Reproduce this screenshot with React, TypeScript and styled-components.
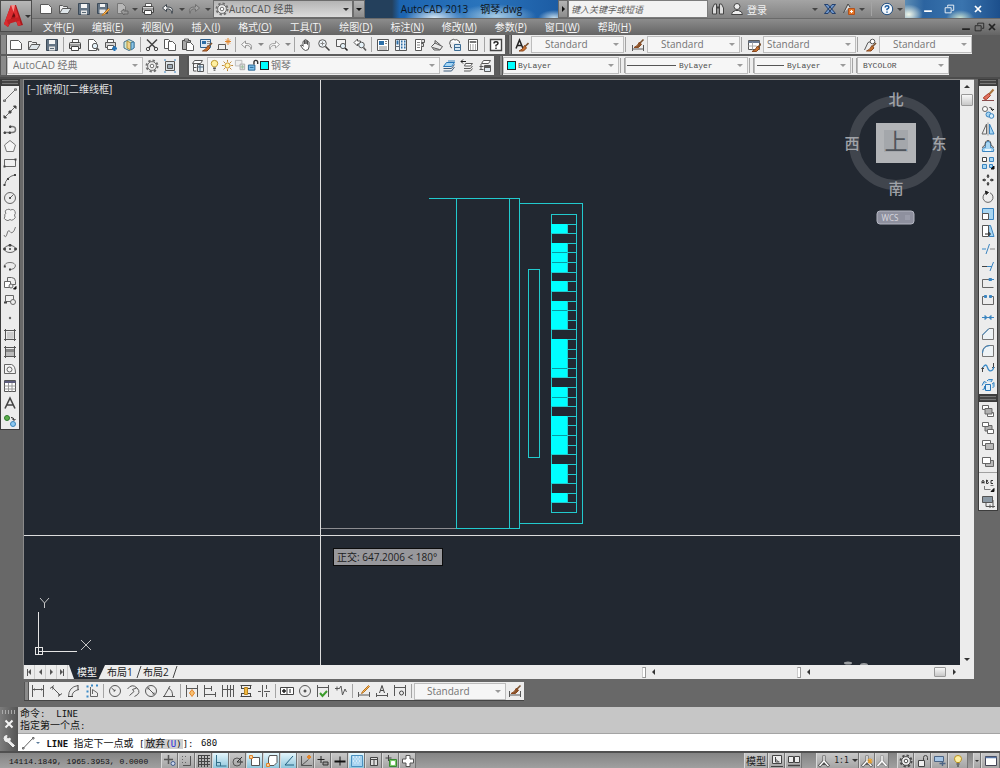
import React from 'react';
import styled, { createGlobalStyle, css } from 'styled-components';

const G = '#585858';
const B = '#3a84c0';
const LB = '#a8d6f2';
const O = '#e2852a';
const CYAN = '#00ffff';
const LINE = '#22cace';

const UI = '"Open Sans", "Noto Sans CJK SC", sans-serif';
const MONO = '"Liberation Mono", "Noto Sans CJK SC", monospace';
const CONSOLE = '"DejaVu Sans Mono", "Noto Sans CJK SC", monospace';

const GlobalStyle = createGlobalStyle`
  * { box-sizing: border-box; }
  html, body { margin: 0; padding: 0; }
  body { background: #686868; font-family: ${UI}; font-size: 10px; color: #222; overflow: hidden; }
  button, input, select { font: inherit; color: inherit; margin: 0; padding: 0; border: 0; background: none; border-radius: 0; outline: none; }
`;

/* ---------- icons, all on a 14 x 14 grid ---------- */

const p = (d: string, stroke: string = G, fill: string = 'none', w: number = 1) => (
  <path d={d} stroke={stroke} fill={fill} strokeWidth={w} />
);

const pencil = <>{p('M11.5 1.5 5.5 7.5 4.5 9.5 6.5 8.5 12.5 2.5Z', '#b87420', '#f2b45c')}</>;
const gear = (c: string) => (
  <>
    <circle cx="7" cy="7" r="5.5" stroke={c} strokeWidth="2" strokeDasharray="2.3 2" />
    <circle cx="7" cy="7" r="4.400" stroke={c} fill="#eee" />
    <circle cx="7" cy="7" r="1.800" stroke={c} fill="#fff" />
  </>
);
const page = (x: number, y: number, w: number, h: number, fill = '#fff') =>
  p(`M${x}.5 ${y}.5h${w - 3}l3 3v${h - 3}h-${w}z`, G, fill);
const compassMan = (c: string) => (
  <>
    {p('M7 1.500V7L2 12.500M7 7l5 5.500M4.500 9.500h5', c, 'none', 3)}
    {p('M7 2V7L2.500 12M7 7l4.500 5', '#fff', 'none', 1.400)}
  </>
);
const painter = (x: number, y: number, light: string) => (
  <g transform={`translate(${x} ${y})`}>
    {p('M9.500 .5 6 4', '#7a5230', 'none', 1.600)}
    {p('M5.500 3l2 2.500L4.500 8.500H0q3.500-1 5.500-5.500z', '#8a4a20', light)}
  </g>
);

const icons: Record<string, React.ReactNode> = {
  new: p('M1.500 2.500h8l3 3v6h-11z', G, '#fdfdfd'),
  open: <>{p('M1.500 11.500v-8h3l1 1h4v2', G, '#eee')}{p('M1.500 11.500l3-5h8.500l-3 5z', G, '#dfe6ea')}</>,
  save: <>{p('M1.500 1.500h11v11h-11z', '#3c4a58', '#647484')}{p('M4 2h6v4H4z', 'none', '#f4f4f4')}{p('M4 8.500h6v4H4z', 'none', '#e4e4e4')}{p('M5 10.500h4', '#5a6a78')}</>,
  saveas: <>{p('M1.500 1.500h10v10h-10z', '#3c4a58', '#647484')}{p('M4 2h5v3H4z', 'none', '#f4f4f4')}{p('M3.500 7.500h6v4h-6z', 'none', '#e4e4e4')}{p('M12.500 6.500l-5 5-1.500 2 2.500-1 5-5z', '#b87420', '#f2b45c')}</>,
  pageoff: <>{p('M2.500 1.500h5l3 3v7h-8z', '#777', '#b8b8b8')}{p('M6 9.500 9 7v2h4v3h-4v1z', '#666', '#999')}</>,
  print: <>{p('M4.500 5V1.500h6V5', G, '#fff')}{p('M1.500 5.500q0-1 1-1h9q1 0 1 1v5h-11z', '#444', '#d6d6d6')}{p('M3.500 8.500h7v4h-7z', '#444', '#fff')}{p('M2 7h10', '#666')}</>,
  preview: <>{page(2, 1, 8, 11)}<circle cx="9" cy="8" r="2.700" stroke={G} fill="#e4f1f8" />{p('M11 10l2 2.500', G, 'none', 1.500)}</>,
  publish: <>{p('M3.500 4V1.500h6V4', G, '#fff')}{p('M1.500 4.500h10v5h-10z', G, '#d6d6d6')}{p('M3.500 7.500h6v4h-6z', G, '#fff')}{p('M8 10.500h5M10.500 8v5', '#2474b8', 'none', 2)}</>,
  globe3d: <>{p('M2 4 7 1.500 12 4v6L7 12.500 2 10z', '#47708a', '#cfe8d4')}{p('M5 3l4 2v7L5 10z', '#b0943a', '#f0d08a')}{p('M9 4.500l3-.5v6l-3 2z', '#3e7ea8', '#8cc4e4')}</>,
  cut: <>{p('M2 1.500 10.500 10M12 1.500 3.500 10', '#444', 'none', 1.500)}<circle cx="3" cy="11" r="1.700" stroke="#444" /><circle cx="11" cy="11" r="1.700" stroke="#444" /></>,
  copy: <>{page(1, 1, 7, 9)}{page(5, 3, 7, 9)}</>,
  paste: <>{p('M1.500 2.500h8v9h-8z', '#4a4a4a', '#a8a8a8')}{p('M3.500 1h4v2h-4z', G, '#ddd')}{page(5, 4, 7, 8)}</>,
  match: <>{p('M1.500 1.500h10v8h-10z', '#2c5f8c', '#dbe9f4')}{p('M3 3h4v3H3z', 'none', '#2c6fa8')}{p('M8 3.500h3M8 5.500h3', '#888')}{painter(3.5, 4.5, '#c8702c')}</>,
  blockedit: <>{p('M1.500 6.500h7v5h-7zM0 11.500h11', G, '#eee')}{p('M11 0v7M8 3.500h6M9 1.500l4 4M13 1.500l-4 4', O)}</>,
  undo: p('M5.500 3 1.500 6.500 5.500 10V7.500Q10.500 6.500 11 11.500 13.500 5 5.500 5.500Z', '#959595', '#fafafa'),
  redo: p('M8.500 3l4 3.500-4 3.500V7.500Q3.500 6.500 3 11.500 .5 5 8.500 5.500Z', '#a2a2a2', '#fafafa'),
  undod: p('M5.500 2.500 1.500 6 5.500 9.500V7Q10.500 6 11 11.500 13.500 4.500 5.500 5Z', '#3c444c', '#f6f6f6'),
  redod: p('M8.500 2.500l4 3.500-4 3.500V7Q3.500 6 3 11.500 .5 4.500 8.500 5Z', '#707070', '#a4a4a4'),
  pan: p('M4 8V3.500q1-1 1.500 0V6 2q1-1 1.500 0v4-3.500q1-1 1.500 0V6.500 4q1-1 1.500 0v5q0 3.500-3.500 3.500Q4.500 12.500 1.500 7.500q1.500-1.500 3 1', '#505050', '#fff'),
  zoom: <><circle cx="5.500" cy="5.500" r="3.800" stroke={G} fill="#eef4f8" />{p('M5.500 3.500v4M3.500 5.500h4', '#888')}{p('M8.500 8.500l4 4', '#444', 'none', 1.600)}</>,
  zoomwin: <>{p('M1.500 1.500h9v7h-9z', G, '#f4f4f4')}<circle cx="8" cy="8" r="2.600" stroke={G} fill="#e4f1f8" />{p('M10 10l2.500 2.500', '#222', 'none', 1.600)}</>,
  zoomprev: <>{p('M1 4.500 4.500 1v2h3v3h-3v2z', G, '#fff')}<circle cx="8.500" cy="7" r="2.800" stroke={G} fill="#e4f1f8" />{p('M10.500 9.500l2.500 3', G, 'none', 1.600)}</>,
  props: <>{p('M1.500 1.500h11v11h-11z', G, '#fff')}{p('M3 3h5v4H3z', 'none', '#2c6fa8')}{p('M9 3.500h2M9 5.500h2M3 9h8M3 11h8', '#888')}</>,
  center: <>{p('M1.500 1.500h11v11h-11z', G, '#eef3f7')}{p('M5.500 1.500v11M1.500 8.500h4', '#5c6c7c')}{p('M7 3.500h1.500M10 3.500h1.500M7 6.500h1.500M10 6.500h1.500M7 9.500h1.500M10 9.500h1.500M2.500 3.500h2M2.500 5.500h2', '#2c6fa8', 'none', 2)}</>,
  palettes: <>{p('M3.500 1.500h6v11h-6z', G, '#fff')}{p('M9.500 1.500h3v3h-3M9.500 5.500h2v3h-2', G, '#ddd')}{p('M5 4.500h3M5 7h3M5 9.500h3', '#888')}</>,
  sheet: <>{p('M1.500 8.500 5 5l7.500 3.500-2.500 3.500H4z', G, '#e8e8e8')}{p('M2.500 9.500l7 2M5 5V2.500L10.500 7', G)}</>,
  markup: <>{p('M2 4q0-2 2-2 1-1.500 3 0 2-1 3 0.500 2 .5 1.500 2.500', G, '#fff')}{p('M2 4q-1 2 .5 3-1 2.500 1.500 3', G)}{p('M6.500 6.500h6v6h-6z', '#3c6c94', '#d6e6f2')}{p('M6.500 9.500h6', '#3c6c94')}</>,
  calc: <>{p('M2.500 1.500h9v11h-9z', G, '#fff')}{p('M4 3.500h6v1H4z', '#777', '#cfe0ec')}{p('M4 7h1M6.500 7h1M9 7h1M4 9h1M6.500 9h1M9 9h1M4 11h1M6.500 11h1M9 11h1', G)}</>,
  help: <>{p('M1.500 1.500h11v11h-11z', '#444', '#fff', 1.400)}{p('M5 5.500Q5 3.800 7 3.800T9 5.500Q9 6.500 7 7.300v1.200M7 9.500v1.500', '#222', 'none', 1.400)}</>,
  textstyle: <>{p('M1 10.500 4.500 2 8 10.500M2.500 7.500h4', '#222', 'none', 1.500)}{painter(4, 4.500, '#c8702c')}</>,
  dimstyle: <>{p('M1.500 7v6M12.500 7v6M1.500 11h11', G)}{painter(3, 1, '#8a5228')}</>,
  tablestyle: <>{p('M1.500 2.500h11v9h-11z', G, '#fff')}{p('M1.500 4h11', '#6c7c94', 'none', 2)}{p('M5.500 4.500v7M1.500 8h8', '#aaa')}{painter(5, 5, '#c8702c')}</>,
  mleader: <>{p('M1.500 12 5 4.500 8 3.500', G)}<circle cx="9.500" cy="3.500" r="2.300" stroke={G} fill="#fff" />{painter(3.500, 4.500, '#c8702c')}</>,
  gear: gear('#707070'),
  geardark: gear('#4c4c4c'),
  wsbox: <>{p('M2.500 2.500h9v9h-9z', G, '#dde4e8')}{p('M4.500 5.500h5v4h-5z', '#555', '#9aa8b4')}{p('M1 1h2M11 1h2M1 13h2M11 13h2', B)}</>,
  layers: <>{p('M3.500 1.500h8l-2 3h-8zM3.500 5h-1v7h3M2.500 8.500h3', G, '#fff')}{p('M6.500 5.500h6v7h-6z', G, '#e8f0f6')}{p('M6.500 8h6M9 5.500v7', '#46627a')}</>,
  bulb: <>{p('M7 1.500q3.500 0 3.500 3.200Q10.500 6.500 8.500 8.500h-3Q3.500 6.500 3.500 4.700 3.500 1.500 7 1.500Z', '#b89020', '#fff0a0')}{p('M5.500 10h3M6 12h2', G, 'none', 1.500)}</>,
  sun: <><circle cx="7" cy="7" r="2.800" stroke="#c88a18" fill="#fff3b0" />{p('M7 1v2M7 11v2M1 7h2M11 7h2M2.800 2.800l1.400 1.400M9.800 9.800l1.400 1.400M11.200 2.800 9.800 4.200M4.200 9.800l-1.400 1.400', '#b87a20')}</>,
  vpfreeze: <>{p('M1.500 1.500h7v6h-7z', '#bbb', '#eee')}{p('M6.500 5.500h5v6h-5z', '#aaa', '#ddd')}{p('M7 8.500h4M9 6.500v4', '#9cbc9c')}</>,
  unlock: <>{p('M1.500 6.500h7v5.500h-7z', '#1c5c8c', '#7cc0ec')}{p('M7.500 6V3.500q0-2 2-2t2 2v2', '#333', 'none', 1.500)}{p('M3 9h4', '#1c5c8c')}</>,
  laycur: <>{p('M4.500 3.500h8l-3 4h-8z', '#2474b8', LB)}{p('M1.500 9.500h8l3-4M1.500 12h8l3-4', '#3c5c7c')}{p('M6 2h7', B)}</>,
  layprev: <>{p('M1 2.500h5M3 .5l-2 2 2 2', '#222')}{p('M5.500 4.500h7l-2 2.500h-6z', G, '#fff')}{p('M4 9.500h6.500l2-2.500M4 12h6.500l2-2.500', G)}</>,
  laystate: <>{p('M5.500 1.500h7l-2 3h-7z', G, '#fff')}{p('M1.500 7.500h4M1.500 10.500h4M3 5v6', G)}{p('M6.500 6.500h6v6h-6z', G, '#dce6ee')}{p('M6.500 8h6', G, 'none', 2)}</>,
  /* draw */
  line: p('M1.500 12.500 12.500 1.500M0.500 12h2v1.500h-2zM11.500 .8h2v1.500h-2z', '#707070'),
  xline: <>{p('M1.500 12.500 12.500 1.500', '#666')}{p('M1 10.500v2.500h2.500zM10.500 1H13v2.500zM6 6h2v2H6z', '#444', '#444')}</>,
  pline: <>{p('M1 10.500h8q3.500 0 3.500-3t-3.500-3H7', '#777', 'none', 1.500)}{p('M1 10h1.500v1.500H1zM6 10h1.500v1.500H6zM6.500 4h1.500v1.500H6.500z', '#444', '#444')}</>,
  polygon: p('M7 1.500l5.500 4.500-2 6.500h-7l-2-6.500z', '#777', '#f4f4f4'),
  rect: <>{p('M1.500 3.500h11v7h-11z', '#666', '#f0f0f0')}{p('M11.500 2.500h2v2h-2zM.5 9.500h2v2h-2z', 'none', '#444')}</>,
  arc: <>{p('M1.500 12.500Q3 4 12 1.800', '#666')}{p('M.5 11h2v2h-2zM4 5h2v2H4zM11 1h2v2h-2z', 'none', '#444')}</>,
  circle: <><circle cx="7" cy="7" r="5.500" stroke="#666" />{p('M7 7l3.500-3.500', '#666')}<circle cx="7" cy="7" r="1" fill="#333" /></>,
  revcloud: p('M3 5.500Q1 2 4.500 1.500 6 .5 7.500 2 11 .5 12 3.500q1 2-.5 3.500 2 3-1 4.500-2 1.500-3.500 0-2 2-4 .5-3-1-1-4-1.500-1.500 1-2.500z', '#777', '#f4f4f4'),
  spline: p('M1 10q1.500 4 3-1Q5 4 7 6.500q1 2 2.500 1Q11.500 6 12.500 2', '#777'),
  ellipse: <><ellipse cx="7" cy="7" rx="5.500" ry="3.500" stroke="#666" />{p('M.8 6h1.500v2H.8zM11.800 6h1.500v2h-1.500zM6 2.500h2v1.500H6zM6.500 6.500h1v1h-1z', '#444', '#444')}</>,
  ellarc: <>{p('M1.500 7Q2 3.500 7 3.500t5.500 3.500Q12 10 8 10.500', '#777')}{p('M.8 6.500h2v2h-2zM6 9.500h2v2H6z', 'none', '#444')}</>,
  insert: <>{p('M4.500 1.500h4q4 0 4 4v3h-8z', '#666', '#eee')}{p('M1.500 5.500h6v6h-6z', '#666', '#fff')}<circle cx="8" cy="10" r="2" stroke="#666" fill="#eee" />{p('M13 13h-2.500l2.500-2.500z', '#111', '#111')}</>,
  block: <>{p('M2.500 2.500h8v6h-8z', '#666', '#f0f0f0')}<circle cx="10" cy="9" r="2.500" stroke="#666" fill="#eee" />{p('M1 9.500h3', '#444', 'none', 2)}</>,
  point: <circle cx="7" cy="7" r="1.200" fill="#666" />,
  hatch: <>{p('M2.500 1v12M11.500 1v12M1 2.500h12M1 11.500h12', '#555')}{p('M4 5h7M4 7h7M4 9h7M5 4v7M7 4v7M9 4v7', '#c0c0c0')}</>,
  gradient: <>{p('M3 4h8v7H3z', 'none', '#bbb')}{p('M3 4h8v3H3z', 'none', '#888')}{p('M2.500 1v12M11.500 1v12M1 2.500h12M1 11.500h12', '#555')}</>,
  region: <>{p('M1.500 2.500h7q4 1 4 9h-11z', '#666', '#f4f4f4')}<circle cx="6.500" cy="7.500" r="2.500" stroke="#666" /></>,
  table: <>{p('M1.500 1.500h11v11h-11z', '#555', '#fff')}{p('M1.500 3h11', '#5c5c7c', 'none', 2)}{p('M5.500 4v8.500M9 4v8.500M1.500 7h11M1.500 10h11', '#999')}</>,
  mtext: p('M2 12.500 7 2l5 10.500M4 9h6', '#444', 'none', 1.600),
  addsel: <><circle cx="4" cy="4" r="2.500" stroke="#2c7a2c" fill="#5cae4c" /><circle cx="10" cy="10" r="2.500" stroke="#3c84b8" fill="#8cc8f0" />{p('M8 3.500q3 0 3 2.500M9.500 5l1.500 1.500L12.500 5', '#222')}</>,
  /* modify */
  erase: <>{p('M1 12.500h12', '#8a4a4a')}{p('M12.500 1.500 8 6.500', '#a8743c', 'none', 2)}{p('M7.500 5.500l2 2-4 4-2.500-.5-.5-1.500z', '#a83c2c', '#e0705c')}</>,
  mcopy: <><circle cx="4" cy="4" r="2.500" stroke="#666" fill="#fff" /><circle cx="7.500" cy="9.500" r="2.500" stroke={B} fill={LB} /><circle cx="10.500" cy="11" r="2.300" stroke={B} fill="#d8eefb" />{p('M8.500 2.500q3 0 3 3M10 4l1.500 1.500L13 4', '#222')}</>,
  mirror: <>{p('M5.500 2v10H1z', '#666', '#eee')}{p('M8.500 2v10H13z', B, LB)}{p('M7 .5v13', '#999')}</>,
  offset: <>{p('M1.500 12.500q-1-4 3-4-1-6 2.500-6t2.500 6q4 0 3 4z', B, LB)}{p('M1.500 9Q1.500 7 4 6.500 4 1.500 7 1.500t3 5q2.500.5 2.500 2.500', '#555')}{p('M4 11h6', '#fff', 'none', 1.500)}</>,
  array: <>{p('M1.500 1.500h4v4h-4z', '#444', '#fff')}{p('M8.500 1.500h4v4h-4z', B, LB)}{p('M1.500 8.500h4v4h-4z', B, LB)}{p('M8.500 8.500h3v3h-3z', B, LB)}{p('M13 13h-3l3-3z', '#111', '#111')}</>,
  move: <>{p('M7 3v2M7 9v2M3 7h2M9 7h2', '#444', 'none', 1.500)}{p('M5.300 3.500 7 1l1.700 2.500zM5.300 10.500 7 13l1.700-2.500zM3.500 5.300 1 7l2.500 1.700zM10.500 5.300 13 7l-2.500 1.700z', 'none', '#333')}</>,
  rotate: <>{p('M5 2.800A5 5 0 1 0 9 2.800', '#666', 'none', 1)}{p('M4.500 1l3 1.500-2.500 2z', '#222', '#222')}</>,
  scale: <>{p('M1.500 1.500h11v11h-11z', B, LB)}{p('M1.500 6.500h6v6h-6z', '#555', '#fff')}</>,
  stretch: <>{p('M7.500 1.500h2l3.500 11h-5z', B, LB)}{p('M1.500 1.500h6v11h-6z', '#555', '#fff')}{p('M4 10h5M7.500 8l2 2-2 2', '#222')}</>,
  trim: <>{p('M1 7h4', '#3a8ac8')}{p('M9 7h5', '#888', 'none', 1)}{p('M8.500 2 5 12', B)}</>,
  extend: <>{p('M1 7.500h5', '#444')}{p('M6 7.500h5', '#3a8ac8')}{p('M12.500 3 9 12', B)}</>,
  breakpt: <>{p('M9 3.500H1.500v8h11', '#666')}{p('M8 2.500h2.500v2H8zM10 3.500h3', B, B)}</>,
  break: <>{p('M4 3.500H1.500v8h11v-8H10', '#666')}{p('M3.500 2.500h2v2h-2zM8.500 2.500h2v2h-2z', B, B)}</>,
  join: <>{p('M1 7.500h12', B)}{p('M4 5.500l2 2-2 2zM10 5.500l-2 2 2 2z', B, B)}</>,
  chamfer: <>{p('M1.500 12.500V8L8 1.500h4.500v11z', '#777', '#eef3f6')}{p('M1.500 8 8 1.500', B)}</>,
  fillet: <>{p('M1.500 12.500V8Q2 2 8 1.500h4.500v11z', '#777', '#eef3f6')}{p('M1.500 9Q2 2 9 1.500', B)}</>,
  blend: <>{p('M1.500 11V6.500M.5 8l1-1.500L3 8M12.500 2v5M11 6l1.500 1.500L13.500 6', '#444')}{p('M2 6.500Q5 1.500 6.500 6.500t5 2.500q1-1 1-3', '#3a8ac8', 'none', 1.300)}</>,
  explode: <>{p('M1 7.500l2-4 2.500 1M6 3l1.500-1.500h4L10 4M11 6l2-1.500v4L11.500 10M1.500 11.500l2-.5V8', B, LB)}{p('M4.500 6.500h5v6h-5z', '#2474b8', '#dff0fb')}</>,
  front: <>{p('M1.500 1.500h6v4h-6zM6.500 8.500h6v4h-6z', '#666', '#fff')}{p('M4 4.500h7v5.500H4z', '#666', '#b0b0b0')}</>,
  back: <>{p('M4 4.500h7v5.500H4z', '#666', '#b0b0b0')}{p('M1.500 1.500h6v4h-6zM6.500 8.500h6v4h-6z', '#666', '#fff')}</>,
  above: <>{p('M1.500 2.500h8v5h-8z', '#666', '#fff')}{p('M4.500 5.500h8v6h-8z', '#666', '#b8b8b8')}</>,
  under: <>{p('M4.500 5.500h8v6h-8z', '#666', '#b8b8b8')}{p('M1.500 2.500h8v6h-8z', '#666', '#fff')}</>,
  textfront: <>{p('M1 5.500V3q1-1 2 0v2.500M1 4.500h2M5.500 2v3.500h1.500q1-1-.5-2 1-.5-.5-1.500zM12 2.500h-2v3h2', '#333')}{p('M3.500 8v3.500h6M9.500 7.500h3', '#777')}{p('M13 13.500h-3l3-3z', '#111', '#111')}</>,
  hatchback: <>{p('M1.500 1.500h10v6h-10z', '#555', '#8a98a4')}{p('M5 8v3.500h4M9 9.500V13M12 5v8M9 11.500h5', '#555')}</>,
  /* dimensions */
  dlinear: p('M1.500 1v12M12.500 1v12M1.500 5.500h11M3.500 4.500v2M10.500 4.500v2', G),
  daligned: p('M1 4.500l4-3M9 12.500l4-3M3 3l8 8M3.500 5.500l1-2M9 11l2-.5', G),
  darc: <>{p('M1.500 12.500Q1.500 3 11 1.500M5 12.500Q5 7 12 5.500', '#666')}{p('M1 12.500h5M11 1v5', '#444')}</>,
  dord: <>{p('M1.500 2.500h2M1.500 7.500h2M1.500 12.500h2M6 1.500h2M11 1.500h2', '#3a8ac8', 'none', 2)}{p('M5.500 3v9.500h7V9L7.500 5.500V10', '#666')}</>,
  dradius: <><circle cx="7" cy="7" r="5.500" stroke={G} />{p('M7 7 3.500 4M5.500 7H7V5.500', G)}</>,
  djog: p('M1.500 5Q6-1 11 4T8.500 12.500M10.500 4l-4 1.500 1.500 2-4.500 4', G),
  ddiam: <><circle cx="7" cy="7" r="5.500" stroke={G} />{p('M3.500 3.500l7 7M4 5.500V4h1.500M10 8.500V10H8.500', G)}</>,
  dang: p('M1 12.500h12M2 12.500 8 2M6.500 4Q11 6.500 10.500 12.500', G),
  dquick: <>{p('M1.500 1v12M12.500 1v12M1.500 4.500h11', G)}{p('M7 5.500 9.500 9 7 12.500 4.500 9z', O, '#f8c070')}</>,
  dbase: p('M1.500 1v12M8.500 2v5M12.500 8v5M1.500 4.500h7M1.500 10.500h11', G),
  dcont: p('M1.500 1v12M6.500 1v12M12.500 1v12M1.500 5.500h11M9.500 1v12', G),
  dspace: <>{p('M1.500 1.500h11M1.500 12.500h11M2.500 2v3M11.500 2v3M2.500 9v3M11.500 9v3M2 4.500h10M2 9.500h10', '#444', 'none', 1)}{p('M5.500 3.500h3v7h-3z', '#b88420', '#f0b840')}</>,
  dbreak: p('M5.500 1v12M9.500 1v4M9.500 9v4M1 7.500h3M7 7.500h6', G),
  tol: <>{p('M.5 3.500h13v7H.5z', '#444', '#fff')}{p('M7 3.500v7', '#444')}{p('M4 5v4M2 7h4', '#222', 'none', 1.500)}{p('M10 5v4', '#222')}</>,
  cmark: <><circle cx="7" cy="7" r="5.500" stroke={G} />{p('M7 5.500v3M5.500 7h3', '#222', 'none', 1)}</>,
  inspect: <>{p('M1.500 1v12M12.500 1v12M1.500 3.500h11', G)}{p('M4 9l2.500 3L11 7', '#3c9c2c', 'none', 2)}</>,
  jogline: p('M1 4.500h4M3 2.500v4M5 5l2-3 1.500 9L11 5l1.500 3', G),
  dimedit: <>{p('M1.500 8v5M12.500 8v5M1.500 11h11', G)}{pencil}</>,
  dimtedit: <>{p('M1.500 9v4M12.500 9v4M1.500 11.500h11', G)}{p('M4.500 9 7 1.500 9.500 9M5.500 6.500h3', '#444')}</>,
  dimupd: <>{p('M1.500 1v11M12.500 1v11M1.500 3.500h11', G)}<circle cx="8.500" cy="9" r="2" stroke="#444" /></>,
  /* status bar */
  infer: <>{p('M5.500 1v9M1 5.500h9', '#555', 'none', 1.500)}<circle cx="10" cy="9.500" r="2" stroke="#445c8c" fill="#cdd8ee" /></>,
  snap: <>{p('M2 2.500h1M5 2.500h1M2 5.500h1M2 8.500h1M5 8.500h1', '#666')}{p('M10.500 2v9.500H3', '#555')}</>,
  grid: p('M1.500 1v12M4.500 1v12M7.500 1v12M10.500 1v12M1 1.500h12M1 4.500h12M1 7.500h12M1 10.500h12', '#444'),
  ortho: p('M2.500 1v11h10M2.500 8.500h4v3.500', '#33708a'),
  polar: <><circle cx="6" cy="8" r="4" stroke="#555" />{p('M6 8l5-5M6 8h6', '#333')}</>,
  osnap: <>{p('M3.500 3.500h8v8h-8z', '#555', '#fff')}{p('M1.500 1.500h3v3h-3z', O, '#f8d0a0')}</>,
  osnap3d: <>{p('M4.500 1.500h7.500v7l-3 3H3.500V4z', '#555', '#fff')}{p('M1.500 9.500h3v3h-3z', O, '#f8d0a0')}</>,
  otrack: p('M11 2 3 11h9', '#226080', 'none', 1),
  ducs: <>{p('M2.500 2v9.500H13M2.500 11.500l7-6', '#555')}{p('M8 3h4M10 1v4', O, 'none', 2)}</>,
  dyn: <>{p('M5 2v7M1.500 5.500h7', '#222', 'none', 1)}{p('M7 8h5v3H7z', '#333', '#999')}</>,
  lwt: <>{p('M1.500 7.500h11', '#111', 'none', 2)}{p('M7 2.500v9', '#111')}</>,
  tpy: <>{p('M1.500 1.500h11v11h-11z', '#4a90c0', '#a8d4f0')}{p('M3 3h1M6 3h1M9 3h1M4.500 5h1M7.500 5h1M3 7h1M6 7h1M9 7h1M4.500 9h1M7.500 9h1', '#fff')}</>,
  qp: <>{p('M3.500 3.500h7v8h-7z', '#444', '#ddd')}{p('M3.500 5.500h7M7 5.500v6', '#444')}</>,
  sc: <>{p('M4.500 1v6M1.500 4h6', '#444')}{p('M5.500 5.500h7v7h-7z', '#3a8a34', '#7cc86c')}{p('M7.500 7.500h3v3h-3z', '#fff', '#fff')}</>,
  am: p('M5 1.500h4V5h3.500v4H9v3.500H5V9H1.500V5H5z', '#555', '#fff'),
  modelv: <>{p('M2.500 1.500h9v8h-9z', '#444', '#ececec')}{p('M5.500 3v5h4M5.500 5l3 3M1 12.500h12', '#444')}</>,
  layv: <>{p('M1.500 2.500h5v6h-5zM7.500 2.500h5v6h-5z', '#444', '#ececec')}{p('M1 11.500h12', '#444', 'none', 1.500)}</>,
  annoman: compassMan('#505050'),
  annovis: <>{compassMan('#606060')}{p('M10 4v6M7.500 7h5M8 5l4 4M12 5l-4 4', '#f0a020')}</>,
  annoauto: compassMan('#8c8c8c'),
  unlocks: <>{p('M2.500 6.500h6v6h-6z', '#444', '#eee')}{p('M7.500 6V3.500q0-2 2-2t2 2V6', '#444')}</>,
  hardware: <>{p('M1.500 2.500h9v5h-9z', '#4c6484', '#a4c4e4')}{p('M6.500 9.500h6M9.500 7v5', '#4c6484', 'none', 1.400)}</>,
  clean: <>{p('M1.500 2.500h11v9h-11z', '#445', '#fff')}{p('M1.500 3.500h11', '#5878a8', 'none', 1.500)}</>,
  /* title bar */
  binoc: <>{p('M1.500 12V6l2-4h2v10zM8.500 12V2h2l2 4v6z', '#444', '#ddd')}{p('M5.500 5.500h3', '#444', 'none', 2)}</>,
  user: <><circle cx="7" cy="4.500" r="3" stroke="#444" fill="#eee" />{p('M1.500 12.500q0-3 4-4h3q4 1 4 4z', '#444', '#eee')}</>,
  exchange: <>{p('M1.500 2.500h3.500l7.500 9H9zM12.500 2.500H9l-7.500 9H5z', '#24406c', '#6c94c8')}</>,
  a360: <>{p('M1.500 11 6 2l2 3', '#444', '#ddd')}{p('M6.500 6.500h6v6h-6z', '#b0501c', '#e87828')}{p('M9.500 8v3M8 9.500h3', '#fff')}</>,
  qmark: <><circle cx="7" cy="7" r="5.700" stroke="#234f80" fill="#f4f8fc" />{p('M5.200 5.500Q5.200 3.800 7 3.800T8.800 5.500Q8.800 6.500 7 7.300v1M7 9.500v1.300', '#1c5ca0', 'none', 1.500)}</>,
  wrench: p('M2 4.500q0-3 3-3L4.500 4 6 5l2-1q1 2-.5 3l5 4.500-1.500 1.500L6 8Q2.500 8 2 4.500z', '#eee', '#eee'),
  xwhite: p('M3.500 3.500l7 7M10.500 3.500l-7 7', '#f4f4f4', 'none', 2),
  cmdline: p('M1.500 12 11 2M.5 11.500h1.500V13H.5zM10.500 1.500H12V3h-1.500z', '#666'),
  min: p('M2.500 9.500h9', 'currentColor', 'none', 2),
  restore: <>{p('M5.500 2.500h7v6h-2M5.500 2.500v2', 'currentColor', 'none', 1)}{p('M2.500 5.500h7v6h-7z', 'currentColor', 'none', 1)}</>,
  close: p('M3.500 3.500l7 7M10.500 3.500l-7 7', 'currentColor', 'none', 2),
};

const Svg = styled.svg`
  display: block;
  flex: none;
`;

const Icon = ({ name, size = 14 }: { name: string; size?: number }) => (
  <Svg width={size} height={size} viewBox="0 0 14 14" fill="none" aria-hidden="true">
    {icons[name]}
  </Svg>
);

/* ---------- shared controls ---------- */

const ToolButton = styled.button<{ $w?: number }>`
  display: flex;
  align-items: center;
  justify-content: center;
  flex: none;
  width: ${(q) => q.$w ?? 18}px;
  height: 100%;
`;

const Tool = ({ name, w }: { name: string; w?: number }) => (
  <ToolButton $w={w} aria-label={name}>
    <Icon name={name} />
  </ToolButton>
);

const Triangle = styled.span<{ $dir?: 'down' | 'up' | 'left' | 'right'; $color?: string; $size?: number }>`
  display: block;
  flex: none;
  width: 0;
  height: 0;
  border: ${(q) => q.$size ?? 3}px solid transparent;
  ${(q) => {
    const c = q.$color ?? '#333';
    if (q.$dir === 'left') return css`border-right-color: ${c}; border-left-width: 0;`;
    if (q.$dir === 'right') return css`border-left-color: ${c}; border-right-width: 0;`;
    if (q.$dir === 'up') return css`border-bottom-color: ${c}; border-top-width: 0;`;
    return css`border-top-color: ${c}; border-bottom-width: 0;`;
  }}
`;

const Caret = ({ w = 9, color = '#444', label }: { w?: number; color?: string; label: string }) => (
  <ToolButton $w={w} aria-label={label}>
    <Triangle $size={3} $color={color} />
  </ToolButton>
);

const Separator = styled.span<{ $w?: number; $double?: boolean }>`
  flex: none;
  align-self: stretch;
  width: ${(q) => q.$w ?? 5}px;
  margin: 2px 0;
  display: flex;
  justify-content: center;
  &::before {
    content: '';
    width: ${(q) => (q.$double ? 3 : 1)}px;
    border-left: 1px solid #a4a4a4;
    border-right: ${(q) => (q.$double ? '1px solid #a4a4a4' : '0')};
  }
`;

const Grip = styled.span<{ $w?: number }>`
  flex: none;
  width: ${(q) => q.$w ?? 7}px;
  align-self: stretch;
  background: #8a8a8a;
  border-left: 1px solid #555;
  border-right: 1px solid #555;
`;

const ComboBox = styled.span<{ $w: number; $pad?: number; $mono?: boolean }>`
  display: flex;
  align-items: center;
  flex: none;
  width: ${(q) => q.$w}px;
  height: 17px;
  padding: 0 4px 0 ${(q) => q.$pad ?? 5}px;
  background: #f6f6f6;
  border: 1px solid #bdbdbd;
  color: ${(q) => (q.$mono ? '#4c4c4c' : '#747474')};
  font-family: ${(q) => (q.$mono ? MONO : UI)};
  font-size: ${(q) => (q.$mono ? 8 : 10)}px;
`;

const NativeSelect = styled.select`
  appearance: none;
  flex: 1;
  min-width: 0;
  height: 15px;
  line-height: 15px;
`;

const Rule = styled.span<{ $w: number }>`
  flex: none;
  width: ${(q) => q.$w}px;
  height: 1px;
  margin-right: 3px;
  background: #555;
`;

const Swatch = styled.span`
  flex: none;
  width: 9px;
  height: 9px;
  margin-right: 2px;
  background: ${CYAN};
  border: 1px solid #222;
`;

const Combo = ({ w, pad, mono, value, label, children }: {
  w: number; pad?: number; mono?: boolean; value: string; label: string; children?: React.ReactNode;
}) => (
  <ComboBox $w={w} $pad={pad} $mono={mono}>
    {children}
    <NativeSelect aria-label={label} defaultValue={value}>
      <option>{value}</option>
    </NativeSelect>
    <Triangle $size={3} $color="#9a9a9a" />
  </ComboBox>
);

/* ---------- header ---------- */

const Shell = styled.div`
  display: flex;
  flex-direction: column;
  min-height: 100vh;
`;

const Header = styled.header`
  display: flex;
  height: 35px;
  flex: none;
`;

const AppButton = styled.button`
  width: 32px;
  height: 32px;
  flex: none;
  display: flex;
  align-items: center;
  gap: 2px;
  padding-left: 3px;
  background: linear-gradient(#b8b8b8, #7c7c7c);
  border: 1px solid #4c4c4c;
`;

const Bars = styled.div`
  flex: 1;
  min-width: 0;
  display: flex;
  flex-direction: column;
`;

const TitleBar = styled.div`
  display: flex;
  align-items: stretch;
  height: 19px;
  flex: none;
  background: linear-gradient(#a4a4a4, #828282);
  border-bottom: 1px solid #6a6a6a;
`;

const QuickAccess = styled.div`
  display: flex;
  padding-left: 4px;
`;

const WorkspaceBox = styled.div`
  flex: none;
  width: 140px;
  display: flex;
  align-items: center;
  padding: 0 3px 0 1px;
  color: #555;
  background: linear-gradient(#b4b4b4, #dcdcdc);
  border: 1px solid #6c6c6c;
`;

const ArrowButton = styled.button<{ $w: number }>`
  flex: none;
  width: ${(q) => q.$w}px;
  display: flex;
  align-items: center;
  justify-content: center;
  background: linear-gradient(#b4b4b4, #8c8c8c);
  border: 1px solid #6c6c6c;
`;

const TitleText = styled.h1`
  flex: 1;
  min-width: 0;
  margin: 0;
  font-size: 10px;
  line-height: 18px;
  font-weight: 400;
  color: #0c1420;
  display: flex;
  justify-content: center;
  gap: 12px;
  white-space: nowrap;
  background:
    radial-gradient(ellipse 30px 12px at 36% 100%, #d8e8f4, transparent),
    radial-gradient(ellipse 40px 12px at 68% 90%, #a8cce4, transparent),
    radial-gradient(ellipse 16px 8px at 98% 100%, #c4dcec, transparent),
    linear-gradient(90deg, #24405c 14%, #1c64b0 18%, #2a74bc 60%, #1c5ca4);
`;

const Search = styled.input`
  flex: none;
  width: 140px;
  background: #f2f2f2;
  border: 1px solid #7c7c7c;
  padding-left: 2px;
  font-size: 9px;
  font-style: italic;
  &::placeholder { color: #5c5c5c; opacity: 1; }
`;

const InfoCenter = styled.div`
  flex: none;
  width: 197px;
  display: flex;
  align-items: stretch;
`;

const SignIn = styled.button`
  width: 64px;
  padding-left: 1px;
  text-align: left;
  color: #f2f2f2;
`;

const WindowControls = styled.div`
  flex: none;
  width: 95px;
  display: flex;
  color: #fff;
  padding-left: 11px;
  background:
    radial-gradient(ellipse 14px 10px at 4% 80%, #f0f6e8, transparent),
    radial-gradient(ellipse 14px 8px at 58% 100%, #c8e0d0, transparent),
    linear-gradient(90deg, #5c8cb4, #2c64a0 20%, #3a74ae 60%, #1c4f8c);
`;

const MenuBar = styled.nav`
  flex: 1;
  display: flex;
  align-items: center;
  padding: 0 2px 0 11px;
  background: linear-gradient(#8c8c8c, #646464);
  color: #f4f4f4;
`;

const MenuItem = styled.button`
  flex: none;
  margin-right: 18px;
  line-height: 15px;
  white-space: nowrap;
`;

const MdiControls = styled.div`
  margin-left: auto;
  height: 100%;
  display: flex;
  color: #222;
`;

const menus = [
  ['文件', 'F'], ['编辑', 'E'], ['视图', 'V'], ['插入', 'I'], ['格式', 'O'], ['工具', 'T'],
  ['绘图', 'D'], ['标注', 'N'], ['修改', 'M'], ['参数', 'P'], ['窗口', 'W'], ['帮助', 'H'],
];

const Logo = () => (
  <Svg width="19" height="26" viewBox="0 0 19 26" aria-hidden="true">
    <path d="M7 2h5l7 20-5 1-2-5-5 1-3 5-4-3z" fill="#a8181c" />
    <path d="M7 2 0 21l4 3L9.500 9l4.500 14 3-1L11 2z" fill="#dc2c30" />
    <path d="M7 2h4L9.500 9z" fill="#f4908c" />
    <path d="M3 17l12-3 1 3.500L4 21z" fill="#c42024" />
    <path d="M8 14l2-4 1.500 3.500z" fill="#6c0c10" />
  </Svg>
);

const TopHeader = () => (
  <Header>
    <AppButton aria-label="Application menu">
      <Logo />
      <Triangle $size={3} />
    </AppButton>
    <Bars>
      <TitleBar>
        <QuickAccess>
          {['new', 'open', 'save', 'saveas', 'pageoff'].map((n) => <Tool key={n} name={n} w={19} />)}
          <Caret label="Page options" w={7} />
          <Tool name="print" w={20} />
          <Tool name="undod" w={20} />
          <Caret label="Undo list" w={7} />
          <Tool name="redod" w={18} />
          <Caret label="Redo list" w={10} />
        </QuickAccess>
        <WorkspaceBox>
          <Icon name="gear" />
          <NativeSelect aria-label="Workspace" defaultValue="AutoCAD 经典">
            <option>AutoCAD 经典</option>
          </NativeSelect>
          <Triangle $size={3} />
        </WorkspaceBox>
        <ArrowButton $w={12} aria-label="Customize"><Triangle $size={3} $color="#111" /></ArrowButton>
        <TitleText><span>AutoCAD 2013</span><span>钢琴.dwg</span></TitleText>
        <ArrowButton $w={10} aria-label="Collapse search"><Triangle $dir="right" $size={3} $color="#111" /></ArrowButton>
        <Search aria-label="Search" placeholder="键入关键字或短语" />
        <InfoCenter>
          <Tool name="binoc" w={19} />
          <Tool name="user" w={19} />
          <SignIn>登录</SignIn>
          <Caret label="Sign in list" w={10} />
          <Tool name="exchange" w={20} />
          <Tool name="a360" w={17} />
          <Caret label="Cloud list" w={9} />
          <Separator $w={12} />
          <Tool name="qmark" w={17} />
          <Caret label="Help list" w={9} />
        </InfoCenter>
        <WindowControls>
          <ToolButton $w={24} aria-label="Minimize"><Icon name="min" size={12} /></ToolButton>
          <ToolButton $w={18} aria-label="Restore"><Icon name="restore" size={12} /></ToolButton>
          <ToolButton $w={40} aria-label="Close"><Icon name="close" size={12} /></ToolButton>
        </WindowControls>
      </TitleBar>
      <MenuBar>
        {menus.map(([text, key]) => (
          <MenuItem key={key}>{text}(<u>{key}</u>)</MenuItem>
        ))}
        <MdiControls>
          <ToolButton $w={13} aria-label="Minimize drawing"><Icon name="min" size={12} /></ToolButton>
          <ToolButton $w={13} aria-label="Restore drawing"><Icon name="restore" size={12} /></ToolButton>
          <ToolButton $w={13} aria-label="Close drawing"><Icon name="close" size={12} /></ToolButton>
        </MdiControls>
      </MenuBar>
    </Bars>
  </Header>
);

/* ---------- toolbars ---------- */

const ToolRow = styled.div`
  display: flex;
  flex: none;
  height: 21px;
  background: #5c5c5c;
`;

const Toolbar = styled.div<{ $gap?: number }>`
  display: flex;
  align-items: center;
  flex: none;
  height: 19px;
  margin-left: ${(q) => q.$gap ?? 0}px;
  background: #ededed;
`;

const StandardRow = () => (
  <ToolRow>
    <Toolbar>
      <Grip />
      {['new', 'open', 'save'].map((n) => <Tool key={n} name={n} />)}
      <Separator />
      {['print', 'preview', 'publish', 'globe3d'].map((n) => <Tool key={n} name={n} />)}
      <Separator />
      {['cut', 'copy', 'paste', 'match', 'blockedit'].map((n) => <Tool key={n} name={n} />)}
      <Separator />
      <Tool name="undo" />
      <Caret label="Undo list" color="#888" />
      <Tool name="redo" />
      <Caret label="Redo list" color="#888" />
      <Separator />
      {['pan', 'zoom', 'zoomwin', 'zoomprev'].map((n) => <Tool key={n} name={n} />)}
      <Separator />
      {['props', 'center', 'palettes', 'sheet', 'markup', 'calc'].map((n) => <Tool key={n} name={n} />)}
      <Separator />
      <Tool name="help" />
    </Toolbar>
    <Toolbar $gap={3}>
      <Grip $w={4} />
      <Tool name="textstyle" w={19} />
      <Combo w={93} pad={13} label="Text style" value="Standard" />
      <Separator $w={4} />
      <Tool name="dimstyle" w={19} />
      <Combo w={93} pad={13} label="Dimension style" value="Standard" />
      <Separator $w={4} />
      <Tool name="tablestyle" w={19} />
      <Combo w={93} pad={3} label="Table style" value="Standard" />
      <Separator $w={4} />
      <Tool name="mleader" w={19} />
      <Combo w={93} pad={13} label="Multileader style" value="Standard" />
    </Toolbar>
  </ToolRow>
);

const LayerRow = () => (
  <ToolRow>
    <Toolbar>
      <Grip />
      <Combo w={136} label="Workspace" value="AutoCAD 经典" />
      <Tool name="gear" />
      <Tool name="wsbox" />
    </Toolbar>
    <Toolbar $gap={8}>
      <Grip $w={1} />
      <Tool name="layers" />
      <Combo w={233} pad={0} label="Layer" value="钢琴">
        {['bulb', 'sun', 'vpfreeze', 'unlock'].map((n) => <Icon key={n} name={n} size={13} />)}
        <Swatch />
      </Combo>
      {['laycur', 'layprev', 'laystate'].map((n) => <Tool key={n} name={n} />)}
    </Toolbar>
    <Toolbar $gap={5}>
      <Grip $w={4} />
      <Combo mono w={116} pad={3} label="Color" value="ByLayer"><Swatch /></Combo>
      <Separator $double $w={6} />
      <Combo mono w={123} pad={1} label="Linetype" value="ByLayer"><Rule $w={49} /></Combo>
      <Separator $double $w={6} />
      <Combo mono w={97} pad={2} label="Lineweight" value="ByLayer"><Rule $w={27} /></Combo>
      <Separator $double $w={6} />
      <Combo mono w={92} label="Plot style" value="BYCOLOR" />
    </Toolbar>
  </ToolRow>
);

/* ---------- drawing area ---------- */

const Workspace = styled.main`
  flex: 1;
  display: flex;
  min-height: 0;
  padding-top: 2px;
  background: linear-gradient(#4c4c4c 0 2px, transparent 2px);
`;

const SideBar = styled.div<{ $w: number }>`
  flex: none;
  width: ${(q) => q.$w}px;
`;

const SideTools = styled.div<{ $h: number }>`
  display: flex;
  flex-direction: column;
  width: 20px;
  height: ${(q) => q.$h}px;
  padding: 0 1px 1px;
  background: #3c3c3c;
`;

const SideGrip = styled.span`
  flex: none;
  height: 5px;
  margin: 1px;
  background: repeating-linear-gradient(#777 0 1px, #444 1px 3px);
`;

const SideButton = styled.button`
  flex: 1;
  min-height: 0;
  display: flex;
  align-items: center;
  justify-content: center;
  background: #ececec;
`;

const SideRule = styled.span`
  flex: none;
  height: 6px;
  background: linear-gradient(#ececec 0 2px, #a0a0a0 2px 3px, #ececec 3px);
`;

const RightTools = styled.div`
  padding-left: 4px;
`;

const drawTools = ['line', 'xline', 'pline', 'polygon', 'rect', 'arc', 'circle', 'revcloud', 'spline', 'ellipse',
  'ellarc', 'insert', 'block', 'point', 'hatch', 'gradient', 'region', 'table', 'mtext', 'addsel'];
const modifyTools = ['erase', 'mcopy', 'mirror', 'offset', 'array', 'move', 'rotate', 'scale', 'stretch', 'trim',
  'extend', 'breakpt', 'break', 'join', 'chamfer', 'fillet', 'blend', 'explode'];

const SideTool = ({ name }: { name: string }) => (
  <SideButton aria-label={name}><Icon name={name} /></SideButton>
);

const Document = styled.section`
  flex: 1;
  min-width: 0;
  display: flex;
  flex-direction: column;
  border-left: 1px solid #8a8a8a;
  border-top: 1px solid #8a8a8a;
`;

const CanvasRow = styled.div`
  flex: 1;
  min-height: 0;
  display: flex;
`;

const Canvas = styled.div`
  position: relative;
  flex: 1;
  min-width: 0;
  overflow: hidden;
  background: #222831;
`;

const Drawing = styled.svg`
  position: absolute;
  inset: 0;
  width: 100%;
  height: 100%;
  display: block;
`;

const ViewLabel = styled.button`
  position: absolute;
  left: 3px;
  top: 2px;
  line-height: 14px;
  font-size: 10px;
  color: #e4e4e4;
`;

const Cube = styled.svg`
  position: absolute;
  right: 12px;
  top: 8px;
`;

const DynTip = styled.div`
  position: absolute;
  left: 309px;
  top: 468px;
  height: 18px;
  width: 110px;
  padding: 0 3px;
  line-height: 16px;
  font-size: 10px;
  white-space: nowrap;
  color: #1c1c1c;
  background: #98989c;
  border: 1px solid #0c0c0c;
`;

const VScroll = styled.div`
  flex: none;
  width: 14px;
  display: flex;
  flex-direction: column;
  align-items: center;
  justify-content: space-between;
  padding: 5px 0 4px;
  background: #ececec;
`;

const ScrollTop = styled.div`
  display: flex;
  flex-direction: column;
  align-items: center;
  gap: 6px;
`;

const Thumb = styled.span<{ $w: number; $h: number }>`
  width: ${(q) => q.$w}px;
  height: ${(q) => q.$h}px;
  background: linear-gradient(#f8f8f8, #c8c8c8);
  border: 1px solid #999;
  border-radius: 1px;
`;

/* rows are counted in key pitches from the top of the keyboard */
const PITCH = 9.613;
const blackKeys = [[1, 1], [3, 3], [7, 1], [9, 3], [13, 4], [18, 2], [21, 4], [26, 2], [29, 1]];
const blackSeams = [4, 5, 10, 16, 19, 23];

const Piano = () => {
  const keys = Array.from({ length: 30 }, (_, i) => Math.round((i + 1) * PITCH) + 0.5);
  return (
    <g stroke={LINE} fill="none" shapeRendering="crispEdges">
      <path d="M405 118.500H496M432.500 118.500V448.500H495.500V118.500M485.500 118.500V448.500" />
      <path d="M495.500 123.500H558.500V443.500H495.500" />
      <path d="M504.500 189.500h11v188h-11z" />
      <g transform="translate(527 134)">
        <path d="M.5 .5h25v298H.5z" />
        <path d={keys.map((y) => `M.5 ${y}h25`).join('')} />
        {blackKeys.map(([row, n]) => {
          const top = Math.round(row * PITCH);
          const h = Math.round((row + n) * PITCH) - top;
          return (
            <g key={row}>
              <rect x="0" y={top} width="16" height={h} fill={CYAN} stroke="none" />
              <path d={`M16.500 ${top}v${h}`} />
            </g>
          );
        })}
        <path d={blackSeams.map((r) => `M1 ${Math.round(r * PITCH)}.5h15`).join('')} stroke="#089aa0" />
      </g>
    </g>
  );
};

const ViewCube = () => (
  <Cube width="104" height="142" viewBox="0 0 104 142" fontFamily='"Noto Sans CJK SC", sans-serif' textAnchor="middle">
    <circle cx="52" cy="55" r="42" fill="none" stroke="#40454d" strokeWidth="10" />
    <g fontSize="15" fontWeight="500" fill="#a0a3a8">
      <text x="52" y="17">北</text>
      <text x="52" y="106">南</text>
      <text x="8" y="61">西</text>
      <text x="95" y="61">东</text>
    </g>
    <rect x="32" y="35" width="40" height="40" fill="#b2b4b7" />
    <rect x="40" y="42" width="24" height="22" fill="#a4a7ab" />
    <text x="52" y="62" fontSize="23" fill="#50555c">上</text>
    <rect x="33" y="123" width="37" height="13" rx="3" fill="#8e909e" stroke="#b4b6c2" />
    <text x="46" y="133" fontSize="8" fontFamily="Noto Sans" fill="#d4d4dc">WCS</text>
    <rect x="61" y="127" width="5" height="5" fill="#9a9caa" />
  </Cube>
);

/* ---------- layout tabs ---------- */

const TabBar = styled.div`
  flex: none;
  height: 14px;
  display: flex;
  background: #ececec;
`;

const NavButton = styled.button`
  width: 11px;
  display: flex;
  align-items: center;
  justify-content: center;
  border-right: 1px solid #ccc;
`;

const NavEdge = styled.span`
  width: 1px;
  height: 7px;
  background: #555;
`;

const ActiveTab = styled.button`
  width: 36px;
  margin-left: 1px;
  font-size: 10px;
  line-height: 13px;
  color: #f4f4f4;
  background: #222831;
  clip-path: polygon(0 0, 100% 0, 82% 100%, 14% 100%);
`;

const Tab = styled.button`
  width: 36px;
  padding-left: 2px;
  font-size: 10px;
  line-height: 13px;
  text-align: left;
  white-space: nowrap;
  display: flex;
  align-items: center;
  gap: 3px;
`;

const TabSlash = () => (
  <Svg width="6" height="12" viewBox="0 0 6 12" aria-hidden="true">
    <path d="M1 12 5 0" stroke="#444" />
  </Svg>
);

const HScroll = styled.div`
  margin-left: auto;
  display: flex;
  align-items: center;
`;

const ScrollPart = styled.div<{ $w: number }>`
  flex: none;
  width: ${(q) => q.$w}px;
  display: flex;
  align-items: center;
  gap: 6px;
`;

const Splitter = styled.span`
  width: 4px;
  height: 11px;
  background: #fff;
  border: 1px solid #999;
  border-left-color: #ccc;
`;

const ScrollEnd = styled.div`
  display: flex;
  align-items: center;
  gap: 7px;
  margin-left: auto;
  padding-right: 18px;
`;

/* ---------- dimension bar, command window, status bar ---------- */

const DimRow = styled.div`
  flex: none;
  height: 28px;
  padding: 3px 0 0 24px;
  display: flex;
`;

const DimToolbar = styled(Toolbar)`
  border-bottom: 1px solid #444;
`;

const Command = styled.section`
  flex: none;
  display: flex;
  height: 44px;
`;

const CommandSide = styled.div`
  flex: none;
  width: 18px;
  display: flex;
  flex-direction: column;
  align-items: center;
  gap: 2px;
  padding-top: 3px;
  background: linear-gradient(90deg, #7c7c7c, #545454);
`;

const DotGrip = styled.span`
  width: 14px;
  height: 4px;
  background: repeating-linear-gradient(90deg, #aaa 0 1px, transparent 1px 3px);
`;

const SideAction = styled.button`
  width: 14px;
  height: 15px;
  display: flex;
  align-items: center;
`;

const CommandMain = styled.div`
  flex: 1;
  min-width: 0;
  display: flex;
  flex-direction: column;
  font-family: ${CONSOLE};
  font-size: 9px;
  color: #111;
`;

const History = styled.div`
  flex: none;
  height: 27px;
  padding: 1px 0 0 2px;
  background: #c6c6c6;
  border-bottom: 1px solid #a4a4a4;
`;

const HistoryLine = styled.div`
  line-height: 12px;
  height: 12px;
  white-space: pre;
`;

const Zh = styled.span`
  font-size: 10px;
`;

const PromptLine = styled.label`
  flex: 1;
  display: flex;
  align-items: center;
  padding-left: 4px;
  background: #fff;
  white-space: pre;
`;

const Option = styled.span`
  padding: 0 1px;
  background: #cfcfcf;
  b { color: #2a2ad8; font-weight: 400; }
`;

const PromptText = styled.span`
  margin: 0 2px 0 1px;
`;

const PromptInput = styled.input`
  flex: 1;
  min-width: 0;
  height: 15px;
`;

const StatusBar = styled.footer`
  flex: none;
  height: 17px;
  display: flex;
  align-items: stretch;
  background: linear-gradient(#848484, #a0a0a0);
  border-top: 2px solid #505050;
`;

const Coords = styled.div`
  flex: none;
  width: 161px;
  padding-left: 9px;
  font-family: ${MONO};
  font-size: 8px;
  line-height: 17px;
  white-space: pre;
  color: #111;
`;

const StatusButton = styled.button<{ $on?: boolean; $w?: number }>`
  flex: none;
  width: ${(q) => q.$w ?? 17}px;
  display: flex;
  align-items: center;
  justify-content: center;
  gap: 3px;
  overflow: hidden;
  background: ${(q) => (q.$on ? 'linear-gradient(#e4f6fc, #8ec6dc)' : 'linear-gradient(#c8c8c8, #a4a4a4)')};
  border-right: 1px solid #747474;
  border-left: 1px solid #d8d8d8;
`;

const StatusToggles = styled.div`
  display: flex;
`;

const ScaleText = styled.span`
  font-family: ${CONSOLE};
  font-size: 8px;
`;

const StatusRight = styled.div`
  margin-left: auto;
  display: flex;
`;

const StatusGroup = styled.div<{ $gap: number }>`
  display: flex;
  margin-right: ${(q) => q.$gap}px;
`;

const toggles: [string, boolean][] = [
  ['infer', false], ['snap', false], ['grid', false], ['ortho', true], ['polar', false], ['osnap', true],
  ['osnap3d', true], ['otrack', true], ['ducs', false], ['dyn', false], ['lwt', false], ['tpy', true],
  ['qp', false], ['sc', false], ['am', false],
];

export default function App() {
  return (
    <Shell>
      <GlobalStyle />
      <TopHeader />
      <StandardRow />
      <LayerRow />
      <Workspace>
        <SideBar $w={23}>
          <SideTools $h={351}>
            <SideGrip />
            {drawTools.map((n) => <SideTool key={n} name={n} />)}
          </SideTools>
        </SideBar>
        <Document>
          <CanvasRow>
            <Canvas>
              <Drawing>
                <Piano />
                <g fill="none" shapeRendering="crispEdges">
                  <path d="M297 448.500H432" stroke="#8c8c90" />
                  <line x1="0" x2="100%" y1="455.500" y2="455.500" stroke="#dcdcdc" />
                  <line x1="296.500" x2="296.500" y1="0" y2="100%" stroke="#dcdcdc" />
                  <path d="M14.500 532V575M11.500 567.500h7v7h-7zM14 571.500H53" stroke="#e4e4e4" />
                </g>
                <path d="M16 518l4.500 5 4.500-5M20.500 523v5M57 560l10 10M67 560l-10 10" stroke="#c4c4c4" fill="none" />
                <ellipse cx="824" cy="583" rx="4" ry="1.500" fill="#9a9da0" />
                <ellipse cx="840" cy="585" rx="4" ry="2" fill="#9a9da0" />
              </Drawing>
              <ViewLabel>[−][俯视][二维线框]</ViewLabel>
              <ViewCube />
              <DynTip>正交: 647.2006 &lt; 180°</DynTip>
            </Canvas>
            <VScroll>
              <ScrollTop>
                <Triangle $dir="up" $size={3} />
                <Thumb $w={12} $h={12} />
              </ScrollTop>
              <Triangle $size={3} />
            </VScroll>
          </CanvasRow>
          <TabBar>
            <NavButton aria-label="First"><NavEdge /><Triangle $dir="left" $color="#555" /></NavButton>
            <NavButton aria-label="Previous"><Triangle $dir="left" $color="#555" /></NavButton>
            <NavButton aria-label="Next"><Triangle $dir="right" $color="#555" /></NavButton>
            <NavButton aria-label="Last"><Triangle $dir="right" $color="#555" /><NavEdge /></NavButton>
            <ActiveTab>模型</ActiveTab>
            <Tab>布局1<TabSlash /></Tab>
            <Tab>布局2<TabSlash /></Tab>
            <HScroll>
              <ScrollPart $w={155}><Splitter /><Triangle $dir="left" $size={3} /></ScrollPart>
              <ScrollPart $w={177}>
                <Splitter /><Triangle $dir="left" $size={3} />
                <ScrollEnd><Thumb $w={12} $h={10} /><Triangle $dir="right" $size={3} /></ScrollEnd>
              </ScrollPart>
            </HScroll>
          </TabBar>
        </Document>
        <SideBar $w={26}>
          <RightTools>
            <SideTools $h={316}>
              <SideGrip />
              {modifyTools.map((n) => <SideTool key={n} name={n} />)}
            </SideTools>
            <SideTools $h={116}>
              <SideGrip />
              {['front', 'back', 'above', 'under'].map((n) => <SideTool key={n} name={n} />)}
              <SideRule />
              {['textfront', 'hatchback'].map((n) => <SideTool key={n} name={n} />)}
            </SideTools>
          </RightTools>
        </SideBar>
      </Workspace>
      <DimRow>
        <DimToolbar>
          <Grip $w={5} />
          {['dlinear', 'daligned', 'darc', 'dord'].map((n) => <Tool key={n} name={n} />)}
          <Separator />
          {['dradius', 'djog', 'ddiam', 'dang'].map((n) => <Tool key={n} name={n} />)}
          <Separator />
          {['dquick', 'dbase', 'dcont', 'dspace', 'dbreak'].map((n) => <Tool key={n} name={n} />)}
          <Separator />
          {['tol', 'cmark', 'inspect', 'jogline'].map((n) => <Tool key={n} name={n} />)}
          <Separator />
          {['dimedit', 'dimtedit', 'dimupd'].map((n) => <Tool key={n} name={n} />)}
          <Separator />
          <Combo w={92} pad={12} label="Current dimension style" value="Standard" />
          <Tool name="dimstyle" />
        </DimToolbar>
      </DimRow>
      <Command>
        <CommandSide>
          <DotGrip />
          <SideAction aria-label="Close command window"><Icon name="xwhite" /></SideAction>
          <SideAction aria-label="Customize command window"><Icon name="wrench" /></SideAction>
        </CommandSide>
        <CommandMain>
          <History>
            <HistoryLine><Zh>命令</Zh>:  LINE</HistoryLine>
            <HistoryLine><Zh>指定第一个点</Zh>:</HistoryLine>
          </History>
          <PromptLine>
            <Icon name="cmdline" />
            <Triangle $size={2} $color="#5c7c9c" />
            <PromptText> <strong>LINE</strong> <Zh>指定下一点或</Zh> [<Option><Zh>放弃</Zh>(<b>U</b>)</Option>]: </PromptText>
            <PromptInput defaultValue="680" />
          </PromptLine>
        </CommandMain>
      </Command>
      <StatusBar>
        <Coords>14114.1849, 1965.3953, 0.0000</Coords>
        <StatusToggles>
          {toggles.map(([n, on]) => (
            <StatusButton key={n} $on={on} aria-label={n} aria-pressed={on}><Icon name={n} /></StatusButton>
          ))}
        </StatusToggles>
        <StatusRight>
          <StatusGroup $gap={14}>
            <StatusButton $w={24}>模型</StatusButton>
            <StatusButton $w={17} aria-label="Quick view layouts"><Icon name="modelv" /></StatusButton>
            <StatusButton $w={17} aria-label="Quick view drawings"><Icon name="layv" /></StatusButton>
          </StatusGroup>
          <StatusGroup $gap={8}>
            <StatusButton $w={43}><Icon name="annoman" /><ScaleText>1:1</ScaleText><Triangle $size={3} /></StatusButton>
            <StatusButton $w={16} aria-label="Annotation visibility"><Icon name="annovis" /></StatusButton>
            <StatusButton $w={14} aria-label="Annotation scale"><Icon name="annoauto" /></StatusButton>
          </StatusGroup>
          <StatusGroup $gap={5}>
            <StatusButton $w={17} aria-label="Workspace switching"><Icon name="geardark" /></StatusButton>
            <StatusButton $w={17} aria-label="Lock toolbars"><Icon name="unlocks" /></StatusButton>
            <StatusButton $w={17} aria-label="Hardware acceleration"><Icon name="hardware" /></StatusButton>
            <StatusButton $w={20} aria-label="Isolate objects"><Icon name="bulb" /></StatusButton>
          </StatusGroup>
          <StatusButton $w={8} aria-label="Status bar menu"><Triangle $size={2} /></StatusButton>
          <StatusButton $w={19} aria-label="Clean screen"><Icon name="clean" /></StatusButton>
        </StatusRight>
      </StatusBar>
    </Shell>
  );
}
